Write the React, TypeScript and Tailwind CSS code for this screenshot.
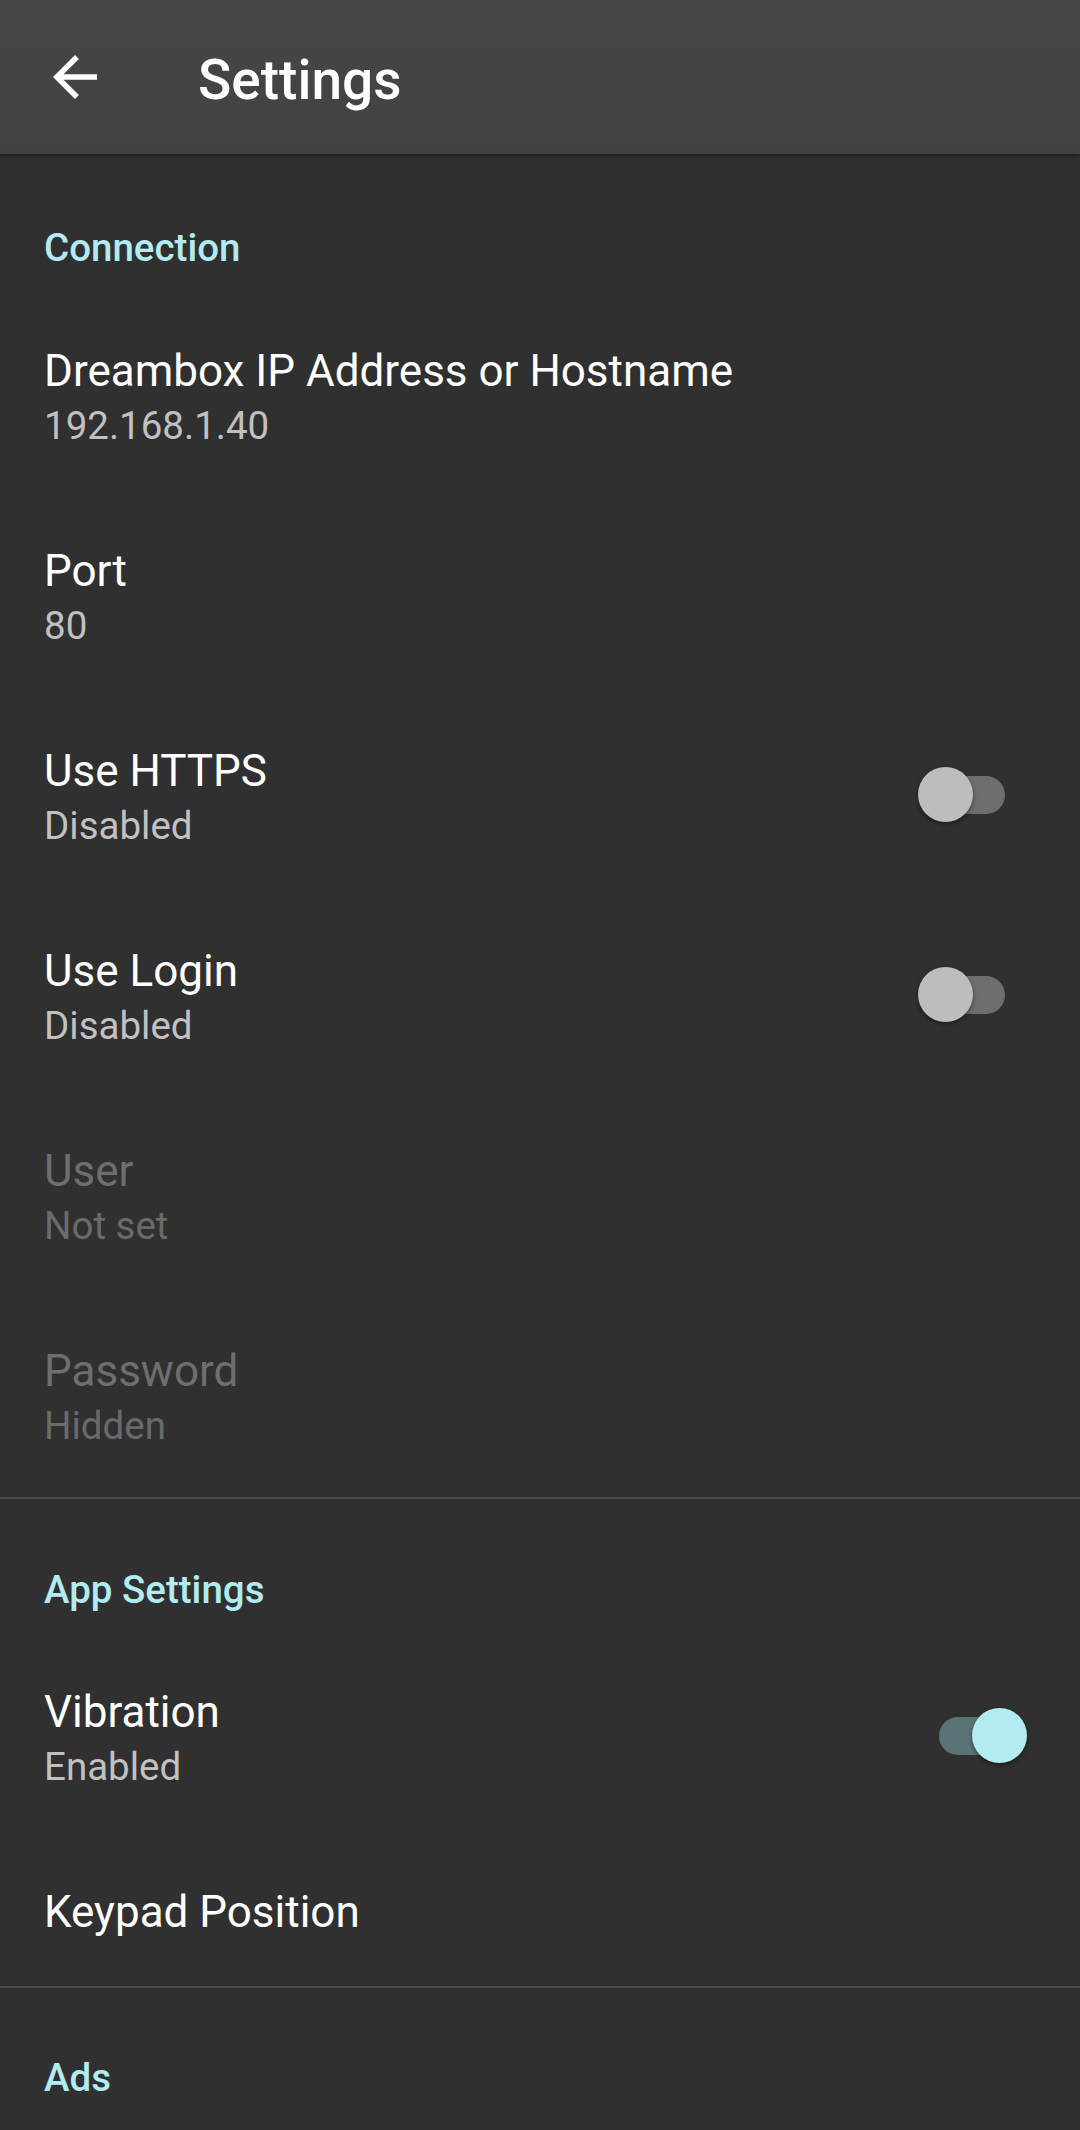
import React from "react";

type Pref = {
  title: string;
  summary?: string;
  disabled?: boolean;
  toggle?: boolean;
  on?: boolean;
};

const CONNECTION: Pref[] = [
  { title: "Dreambox IP Address or Hostname", summary: "192.168.1.40" },
  { title: "Port", summary: "80" },
  { title: "Use HTTPS", summary: "Disabled", toggle: true, on: false },
  { title: "Use Login", summary: "Disabled", toggle: true, on: false },
  { title: "User", summary: "Not set", disabled: true },
  { title: "Password", summary: "Hidden", disabled: true },
];

const APP_SETTINGS: Pref[] = [
  { title: "Vibration", summary: "Enabled", toggle: true, on: true },
  { title: "Keypad Position" },
];

function Switch({ on }: { on: boolean }) {
  return (
    <div className="relative mb-[6px] h-[55px] w-[109px] shrink-0">
      <div
        className={`absolute left-[21px] top-[9px] h-[38px] w-[66px] rounded-full ${
          on ? "bg-[#5a7475]" : "bg-[#6e6e6e]"
        }`}
      />
      <div
        className={`absolute top-0 h-[55px] w-[55px] rounded-full shadow-[0_2px_4px_rgba(0,0,0,0.45)] ${
          on ? "right-0 bg-[#b2ebf2]" : "left-0 bg-[#bdbdbd]"
        }`}
      />
    </div>
  );
}

function PrefRow({ pref }: { pref: Pref }) {
  return (
    <div className="flex items-center justify-between py-[45px] pl-[44px] pr-[53px]">
      <div className="flex flex-col">
        <span
          className={`text-[44px] leading-[58px] ${
            pref.disabled ? "text-[#6e6e6e]" : "text-white"
          }`}
        >
          {pref.title}
        </span>
        {pref.summary && (
          <span
            className={`text-[38.5px] leading-[52px] ${
              pref.disabled ? "text-[#6a6a6a]" : "text-[#c1c1c1]"
            }`}
          >
            {pref.summary}
          </span>
        )}
      </div>
      {pref.toggle && <Switch on={!!pref.on} />}
    </div>
  );
}

function Category({ label, className }: { label: string; className: string }) {
  return (
    <div className={`pl-[44px] ${className}`}>
      <span className="text-[38.5px] font-medium leading-[52px] text-[#b2ebf2]">
        {label}
      </span>
    </div>
  );
}

export default function App() {
  return (
    <div
      className="flex h-[2130px] w-[1080px] flex-col overflow-hidden bg-[#303030]"
      style={{ fontFamily: "Roboto, 'Noto Sans', sans-serif" }}
    >
      {/* Toolbar */}
      <header className="relative z-10 flex h-[154px] shrink-0 items-center bg-gradient-to-b from-[#464646] to-[#424242] pl-[42px] shadow-[0_2px_3px_rgba(0,0,0,0.35)]">
        <svg viewBox="0 0 24 24" className="h-[66px] w-[66px] fill-white">
          <path d="M20 11H7.83l5.59-5.59L12 4l-8 8 8 8 1.41-1.41L7.83 13H20v-2z" />
        </svg>
        <h1 className="ml-[90px] mt-[6px] text-[55px] font-medium leading-[64px] text-white">
          Settings
        </h1>
      </header>

      {/* Connection */}
      <Category label="Connection" className="pt-[68px] pb-[23px]" />
      {CONNECTION.map((p) => (
        <PrefRow key={p.title} pref={p} />
      ))}

      <div className="h-[2px] shrink-0 bg-[#4b4b4b]" />

      {/* App settings */}
      <Category label="App Settings" className="pt-[65px] pb-[22px]" />
      {APP_SETTINGS.map((p) => (
        <PrefRow key={p.title} pref={p} />
      ))}

      <div className="h-[2px] shrink-0 bg-[#4b4b4b]" />

      {/* Ads */}
      <Category label="Ads" className="pt-[64px] pb-[24px]" />
    </div>
  );
}
